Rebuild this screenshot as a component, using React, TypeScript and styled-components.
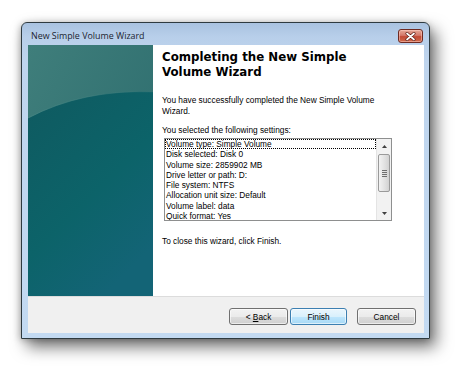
import React from "react";
import styled, { createGlobalStyle } from "styled-components";

const GlobalStyle = createGlobalStyle`
  html, body {
    margin: 0;
    padding: 0;
    background: #ffffff;
  }
  body {
    font-family: "Liberation Sans", Arial, sans-serif;
  }
`;

const Page = styled.div`
  width: 473px;
  height: 382px;
  padding: 22px 0 0 21px;
  box-sizing: border-box;
`;

const Window = styled.div`
  width: 409px;
  height: 317px;
  box-sizing: border-box;
  border: 1px solid #2e3a40;
  border-radius: 6px 6px 0 0;
  padding: 0 5px 5px 6px;
  display: flex;
  flex-direction: column;
  background: linear-gradient(
    to bottom,
    #a9c2e0 0px,
    #b8cfea 14px,
    #bfd5ee 40px,
    #c3daf2 100%
  );
  box-shadow: 6px 8px 16px rgba(0, 0, 0, 0.55), -1px 1px 7px rgba(0, 0, 0, 0.25);
`;

const TitleBar = styled.div`
  height: 22px;
  display: flex;
  align-items: flex-start;
  justify-content: space-between;
  padding: 0 1px 0 3px;
`;

const TitleText = styled.span`
  font-family: "Open Sans", "Liberation Sans", sans-serif;
  font-size: 8.9px;
  line-height: 22px;
  padding-top: 2px;
  color: #1b2430;
`;

const CloseButton = styled.div`
  margin-top: 6px;
  width: 25px;
  height: 14px;
  box-sizing: border-box;
  border: 1px solid #6e2a22;
  border-radius: 3px;
  background: linear-gradient(
    to bottom,
    #e6a898 0%,
    #d4786a 45%,
    #c24a36 55%,
    #cf6a4c 100%
  );
  box-shadow: inset 0 0 0 1px rgba(255, 210, 200, 0.5);
  display: flex;
  align-items: center;
  justify-content: center;
`;

const Client = styled.div`
  flex: 1;
  display: flex;
  flex-direction: column;
  background: #f0f0f0;
`;

const Main = styled.div`
  height: 251px;
  display: flex;
`;

const SidePanel = styled.div`
  width: 125px;
  height: 100%;
  flex-shrink: 0;
  svg {
    display: block;
  }
`;

const Content = styled.div`
  flex: 1;
  background: #ffffff;
  padding: 5px 32px 0 9px;
  color: #000;
`;

const Heading = styled.h1`
  margin: 0;
  font-family: "DejaVu Sans", Verdana, sans-serif;
  font-weight: bold;
  font-size: 11.8px;
  line-height: 15px;
`;

const Paragraph = styled.p<{ $top: number }>`
  margin: ${(p) => p.$top}px 0 0 0;
  font-size: 8.3px;
  line-height: 11px;
`;

const ListBox = styled.div`
  margin: 2px 0 0 2px;
  height: 83px;
  box-sizing: border-box;
  border: 1px solid #8e8f8f;
  display: flex;
  overflow: hidden;
`;

const Items = styled.div`
  flex: 1;
  overflow: hidden;
`;

const Item = styled.div<{ $focus?: boolean }>`
  font-size: 8.3px;
  line-height: 10.3px;
  height: 10.3px;
  padding-left: 1px;
  box-sizing: border-box;
  white-space: nowrap;
  outline: ${(p) => (p.$focus ? "1px dotted #000" : "none")};
  outline-offset: -1px;
`;

const ScrollBar = styled.div`
  width: 14px;
  flex-shrink: 0;
  display: flex;
  flex-direction: column;
  background: #f2f2f2;
  border-left: 1px solid #e4e4e4;
`;

const Arrow = styled.div`
  height: 14px;
  display: flex;
  align-items: center;
  justify-content: center;
`;

const Track = styled.div`
  flex: 1;
  padding: 1px 1px 0 1px;
`;

const Thumb = styled.div`
  height: 38px;
  box-sizing: border-box;
  border: 1px solid #9a9a9a;
  border-radius: 2px;
  background: linear-gradient(to right, #f3f3f3, #e0e0e0 60%, #d2d2d2);
  display: flex;
  flex-direction: column;
  align-items: center;
  justify-content: center;
  gap: 1px;
`;

const Grip = styled.div`
  width: 5px;
  height: 1px;
  background: #6f6f6f;
`;

const ButtonBar = styled.div`
  flex: 1;
  border-top: 1px solid #dcdcdc;
  display: flex;
  justify-content: flex-end;
  align-items: flex-start;
  padding: 11px 8px 0 0;
`;

const Button = styled.div<{ $default?: boolean; $gap: number }>`
  width: ${(p) => (p.$default ? 57 : 59)}px;
  height: 17px;
  margin-left: ${(p) => p.$gap}px;
  box-sizing: border-box;
  border: 1px solid ${(p) => (p.$default ? "#3c7fb1" : "#707070")};
  border-radius: 3px;
  background: ${(p) =>
    p.$default
      ? "linear-gradient(to bottom, #eaf6fd 0%, #d9f0fc 50%, #bee6fd 51%, #a7d9f5 100%)"
      : "linear-gradient(to bottom, #f2f2f2 0%, #ebebeb 50%, #dddddd 51%, #cfcfcf 100%)"};
  box-shadow: inset 0 0 0 1px rgba(255, 255, 255, 0.6);
  display: flex;
  align-items: center;
  justify-content: center;
  font-size: 8.3px;
  color: #000;
  u {
    text-decoration: underline;
  }
`;

const settings = [
  "Volume type: Simple Volume",
  "Disk selected: Disk 0",
  "Volume size: 2859902 MB",
  "Drive letter or path: D:",
  "File system: NTFS",
  "Allocation unit size: Default",
  "Volume label: data",
  "Quick format: Yes",
];

const PanelArt = () => (
  <svg width="125" height="251" viewBox="0 0 125 251">
    <defs>
      <linearGradient id="upper" x1="0" y1="0" x2="1" y2="1">
        <stop offset="0" stopColor="#3f7e7b" />
        <stop offset="1" stopColor="#2a6a6c" />
      </linearGradient>
      <linearGradient id="lower" x1="0" y1="0" x2="0.6" y2="1">
        <stop offset="0" stopColor="#0f5a60" />
        <stop offset="0.6" stopColor="#0c6369" />
        <stop offset="1" stopColor="#136476" />
      </linearGradient>
      <linearGradient id="rim" x1="0" y1="0" x2="1" y2="0">
        <stop offset="0" stopColor="#4e8c88" stopOpacity="0.7" />
        <stop offset="1" stopColor="#3b7a7a" stopOpacity="0.3" />
      </linearGradient>
    </defs>
    <rect width="125" height="251" fill="url(#upper)" />
    <path d="M0,73 Q55,44 125,47 L125,251 L0,251 Z" fill="url(#lower)" />
    <path d="M0,73 Q55,44 125,47" fill="none" stroke="url(#rim)" strokeWidth="1" />
  </svg>
);

export default function App() {
  return (
    <Page>
      <GlobalStyle />
      <Window>
        <TitleBar>
          <TitleText>New Simple Volume Wizard</TitleText>
          <CloseButton>
            <svg width="11" height="9" viewBox="0 0 11 9">
              <path d="M2,1.5 L9,7.5 M9,1.5 L2,7.5" stroke="#5a1a12" strokeWidth="3" strokeLinecap="round" />
              <path d="M2,1.5 L9,7.5 M9,1.5 L2,7.5" stroke="#ffffff" strokeWidth="1.7" strokeLinecap="round" />
            </svg>
          </CloseButton>
        </TitleBar>
        <Client>
          <Main>
            <SidePanel>
              <PanelArt />
            </SidePanel>
            <Content>
              <Heading>
                Completing the New Simple
                <br />
                Volume Wizard
              </Heading>
              <Paragraph $top={15}>
                You have successfully completed the New Simple Volume
                <br />
                Wizard.
              </Paragraph>
              <Paragraph $top={8}>You selected the following settings:</Paragraph>
              <ListBox>
                <Items>
                  {settings.map((s, i) => (
                    <Item key={s} $focus={i === 0}>
                      {s}
                    </Item>
                  ))}
                </Items>
                <ScrollBar>
                  <Arrow>
                    <svg width="5" height="3" viewBox="0 0 5 3">
                      <path d="M0,3 L2.5,0 L5,3 Z" fill="#404040" />
                    </svg>
                  </Arrow>
                  <Track>
                    <Thumb>
                      <Grip />
                      <Grip />
                      <Grip />
                      <Grip />
                    </Thumb>
                  </Track>
                  <Arrow>
                    <svg width="5" height="3" viewBox="0 0 5 3">
                      <path d="M0,0 L2.5,3 L5,0 Z" fill="#404040" />
                    </svg>
                  </Arrow>
                </ScrollBar>
              </ListBox>
              <Paragraph $top={15}>To close this wizard, click Finish.</Paragraph>
            </Content>
          </Main>
          <ButtonBar>
            <Button $gap={0}>
              &lt;&nbsp;<u>B</u>ack
            </Button>
            <Button $gap={2} $default>
              Finish
            </Button>
            <Button $gap={10}>Cancel</Button>
          </ButtonBar>
        </Client>
      </Window>
    </Page>
  );
}
